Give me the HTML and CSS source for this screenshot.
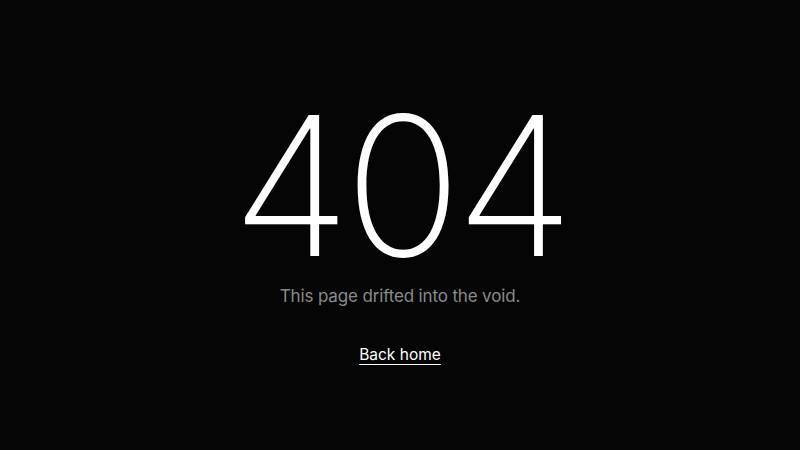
FILE: index.html
```html
<!DOCTYPE html>
<html lang="en">
<head>
<meta charset="utf-8">
<link rel="stylesheet" href="styles.css">
<title>404</title>
</head>
<body>
<main class="page">
  <h1 class="code">404</h1>
  <p class="msg">This page drifted into the void.</p>
  <a class="home" href="#">Back home</a>
</main>
</body>
</html>
```
FILE: styles.css
```css
html, body {
  margin: 0;
  height: 100%;
  background: #050505;
}
body {
  font-family: Inter, "Noto Sans", sans-serif;
  color: #fff;
}
.page {
  box-sizing: border-box;
  height: 100%;
  padding-top: 27px;
  display: flex;
  flex-direction: column;
  align-items: center;
  justify-content: center;
}
.code {
  margin: 0;
  font-size: 194px;
  font-weight: 200;
  line-height: 0.75;
  letter-spacing: -6px;
}
.msg {
  margin: 27px 0 0;
  font-size: 17px;
  color: #8a8a8a;
  letter-spacing: -0.15px;
}
.home {
  margin-top: 39px;
  font-size: 15.5px;
  color: #fff;
  text-decoration: underline;
  text-underline-offset: 4px;
}
```
